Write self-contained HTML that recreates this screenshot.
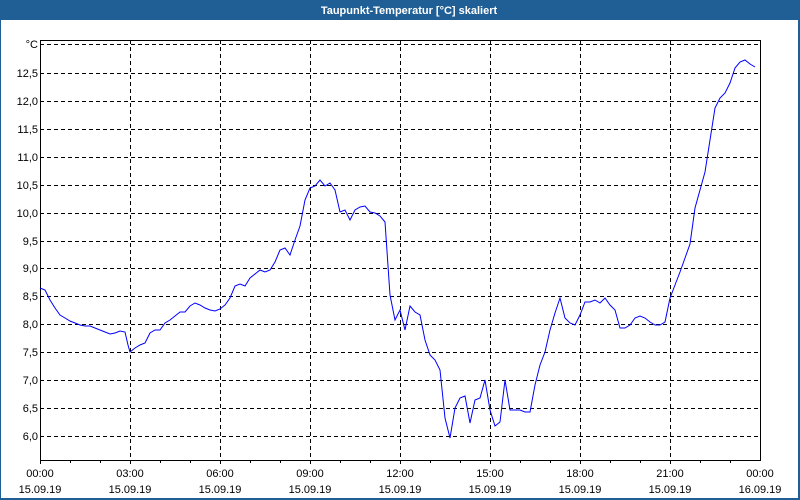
<!DOCTYPE html>
<html><head><meta charset="utf-8"><style>
html,body{margin:0;padding:0;background:#fff;width:800px;height:500px;overflow:hidden}
svg{display:block}
text{font-family:"Liberation Sans",sans-serif;font-size:11px;fill:#000}
</style></head><body>
<svg width="800" height="500" viewBox="0 0 800 500">
<rect x="0" y="0" width="800" height="500" fill="#1f5f96"/>
<rect x="1" y="20" width="797" height="478" fill="#fff"/>
<text x="409" y="14" text-anchor="middle" style="fill:#fff;font-weight:bold;font-size:11px">Taupunkt-Temperatur [°C] skaliert</text>
<g stroke="#000" stroke-width="1" stroke-dasharray="4,3" shape-rendering="crispEdges">
<line x1="40" y1="44.5" x2="760" y2="44.5"/>
<line x1="40" y1="73.5" x2="760" y2="73.5"/>
<line x1="40" y1="101.5" x2="760" y2="101.5"/>
<line x1="40" y1="129.5" x2="760" y2="129.5"/>
<line x1="40" y1="157.5" x2="760" y2="157.5"/>
<line x1="40" y1="185.5" x2="760" y2="185.5"/>
<line x1="40" y1="213.5" x2="760" y2="213.5"/>
<line x1="40" y1="241.5" x2="760" y2="241.5"/>
<line x1="40" y1="268.5" x2="760" y2="268.5"/>
<line x1="40" y1="296.5" x2="760" y2="296.5"/>
<line x1="40" y1="324.5" x2="760" y2="324.5"/>
<line x1="40" y1="352.5" x2="760" y2="352.5"/>
<line x1="40" y1="380.5" x2="760" y2="380.5"/>
<line x1="40" y1="408.5" x2="760" y2="408.5"/>
<line x1="40" y1="436.5" x2="760" y2="436.5"/>
<line x1="130.5" y1="40" x2="130.5" y2="460"/>
<line x1="220.5" y1="40" x2="220.5" y2="460"/>
<line x1="310.5" y1="40" x2="310.5" y2="460"/>
<line x1="400.5" y1="40" x2="400.5" y2="460"/>
<line x1="490.5" y1="40" x2="490.5" y2="460"/>
<line x1="580.5" y1="40" x2="580.5" y2="460"/>
<line x1="670.5" y1="40" x2="670.5" y2="460"/>
</g>
<rect x="40.5" y="40.5" width="720" height="420" fill="none" stroke="#000" shape-rendering="crispEdges"/>
<g stroke="#000" shape-rendering="crispEdges">
<line x1="70.5" y1="460" x2="70.5" y2="463"/><line x1="100.5" y1="460" x2="100.5" y2="463"/><line x1="130.5" y1="460" x2="130.5" y2="464"/>
<line x1="160.5" y1="460" x2="160.5" y2="463"/><line x1="190.5" y1="460" x2="190.5" y2="463"/><line x1="220.5" y1="460" x2="220.5" y2="464"/>
<line x1="250.5" y1="460" x2="250.5" y2="463"/><line x1="280.5" y1="460" x2="280.5" y2="463"/><line x1="310.5" y1="460" x2="310.5" y2="464"/>
<line x1="340.5" y1="460" x2="340.5" y2="463"/><line x1="370.5" y1="460" x2="370.5" y2="463"/><line x1="400.5" y1="460" x2="400.5" y2="464"/>
<line x1="430.5" y1="460" x2="430.5" y2="463"/><line x1="460.5" y1="460" x2="460.5" y2="463"/><line x1="490.5" y1="460" x2="490.5" y2="464"/>
<line x1="520.5" y1="460" x2="520.5" y2="463"/><line x1="550.5" y1="460" x2="550.5" y2="463"/><line x1="580.5" y1="460" x2="580.5" y2="464"/>
<line x1="610.5" y1="460" x2="610.5" y2="463"/><line x1="640.5" y1="460" x2="640.5" y2="463"/><line x1="670.5" y1="460" x2="670.5" y2="464"/>
<line x1="700.5" y1="460" x2="700.5" y2="463"/><line x1="730.5" y1="460" x2="730.5" y2="463"/><line x1="40.5" y1="460" x2="40.5" y2="464"/>
</g>
<g text-anchor="end">
<text x="38" y="48">°C</text>
<text x="38" y="77">12,5</text><text x="38" y="105">12,0</text><text x="38" y="133">11,5</text>
<text x="38" y="161">11,0</text><text x="38" y="189">10,5</text><text x="38" y="217">10,0</text>
<text x="38" y="245">9,5</text><text x="38" y="272">9,0</text><text x="38" y="300">8,5</text>
<text x="38" y="328">8,0</text><text x="38" y="356">7,5</text><text x="38" y="384">7,0</text>
<text x="38" y="412">6,5</text><text x="38" y="440">6,0</text>
</g>
<g text-anchor="middle">
<text x="40" y="477">00:00</text><text x="40" y="493">15.09.19</text>
<text x="130" y="477">03:00</text><text x="130" y="493">15.09.19</text>
<text x="220" y="477">06:00</text><text x="220" y="493">15.09.19</text>
<text x="310" y="477">09:00</text><text x="310" y="493">15.09.19</text>
<text x="400" y="477">12:00</text><text x="400" y="493">15.09.19</text>
<text x="490" y="477">15:00</text><text x="490" y="493">15.09.19</text>
<text x="580" y="477">18:00</text><text x="580" y="493">15.09.19</text>
<text x="670" y="477">21:00</text><text x="670" y="493">15.09.19</text>
<text x="760" y="477">00:00</text><text x="760" y="493">16.09.19</text>
</g>
<polyline fill="none" stroke="#0000ff" stroke-width="1" points="40,288 45,290 50,300 55,308 60,315 65,318 70,321 75,323 80,325 85,326 90,326 95,328 100,330 105,332 110,334 115,333 120,331 125,332 128,345 130,352 135,348 140,345 145,343 150,333 155,330 160,330 165,323 170,320 175,316 180,312 185,312 190,306 195,303 200,305 205,308 210,310 215,311 220,309 225,305 230,298 235,286 240,284 245,286 250,278 255,274 260,270 265,272 270,270 275,262 280,250 285,248 290,255 295,240 300,226 305,200 310,188 315,186 320,180 325,186 330,183 335,190 340,212 345,210 350,220 355,210 360,207 365,206 370,212 375,213 380,216 385,222 390,295 395,320 400,310 405,330 410,306 415,312 420,315 425,340 430,355 435,360 440,370 445,418 450,438 455,408 460,398 465,396 470,423 475,400 480,398 485,380 490,410 495,426 500,422 505,380 510,410 515,410 520,410 525,412 530,412 535,385 540,365 545,352 550,330 555,313 560,298 565,318 570,323 575,325 580,315 585,302 590,302 595,300 600,303 605,298 610,305 615,310 620,328 625,328 630,325 635,318 640,316 645,318 650,322 655,325 660,325 665,322 670,298 675,285 680,272 685,258 690,244 695,208 700,190 705,172 710,140 715,108 720,98 725,93 730,83 735,68 740,62 745,60 750,64 755,67"/>
</svg>
</body></html>
